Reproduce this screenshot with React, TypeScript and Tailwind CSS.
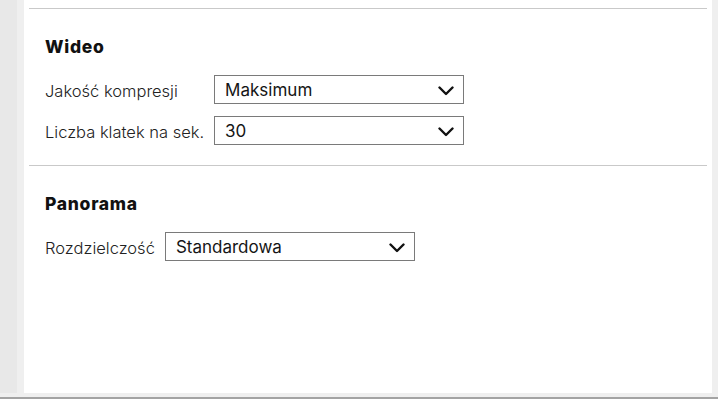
import { useState } from 'react';

type Option = { value: string; label: string };

const Chevron = () => (
  <svg viewBox="0 0 16 10" className="h-[10px] w-[16px]" fill="none">
    <path d="M1.5 1.5 8 8l6.5-6.5" stroke="#111" strokeWidth="2.4" strokeLinecap="round" strokeLinejoin="round" />
  </svg>
);

const SelectBox = ({ value, options }: { value: string; options: Option[] }): JSX.Element => {
  const [current, setCurrent] = useState(value);
  return (
    <div className="relative h-[29px] w-[250px] border border-[#7a7a7a] bg-white">
      <select
        value={current}
        onChange={(e) => setCurrent(e.target.value)}
        className="h-full w-full appearance-none bg-transparent pl-[10px] pr-8 pt-[2px] text-[17px] leading-[25px] text-[#151515] outline-none"
      >
        {options.map((o) => (
          <option key={o.value} value={o.value}>
            {o.label}
          </option>
        ))}
      </select>
      <span className="pointer-events-none absolute right-[9px] top-[10px]">
        <Chevron />
      </span>
    </div>
  );
};

const Section = ({ title, children }: { title: string; children: React.ReactNode }): JSX.Element => (
  <section className="border-t border-[#c9c9c9] pl-4 pt-[28px] pb-[20px]">
    <h2 className="text-[17.5px] font-extrabold leading-[20px] tracking-[0.7px] text-[#111]">{title}</h2>
    <div className="mt-[18px] grid w-max grid-cols-[auto_250px] items-center gap-x-[10px] gap-y-[12px]">
      {children}
    </div>
  </section>
);

const Row = ({ label, value, options }: { label: string; value: string; options: Option[] }) => (
  <>
    <span className="pt-[2px] text-[16.5px] font-light leading-[20px] text-[#222]">{label}</span>
    <SelectBox value={value} options={options} />
  </>
);

const App = (): JSX.Element => {
  return (
    <div
      className="flex h-[399px] w-[718px] flex-col overflow-hidden bg-[#efefef]"
      style={{ fontFamily: 'Inter, "Noto Sans", sans-serif' }}
    >
      <div className="flex flex-1">
        <div className="w-[17px] bg-[#e8e8e8]" />
        <div className="w-[7px] bg-[#efefef]" />
        <main className="flex-1 bg-white pt-[8px]">
          <div className="mx-[5px]">
            <Section title="Wideo">
              <Row
                label="Jakość kompresji"
                value="max"
                options={[
                  { value: 'low', label: 'Niska' },
                  { value: 'mid', label: 'Średnia' },
                  { value: 'max', label: 'Maksimum' },
                ]}
              />
              <Row
                label="Liczba klatek na sek."
                value="30"
                options={[
                  { value: '15', label: '15' },
                  { value: '24', label: '24' },
                  { value: '30', label: '30' },
                ]}
              />
            </Section>
            <Section title="Panorama">
              <Row
                label="Rozdzielczość"
                value="std"
                options={[
                  { value: 'std', label: 'Standardowa' },
                  { value: 'high', label: 'Wysoka' },
                ]}
              />
            </Section>
          </div>
        </main>
        <div className="w-[6px] bg-[#efefef]" />
      </div>
      <div className="h-[4px] bg-[#efefef]" />
      <div className="h-[2px] bg-[#a3a3a3]" />
    </div>
  );
};

export default App;
